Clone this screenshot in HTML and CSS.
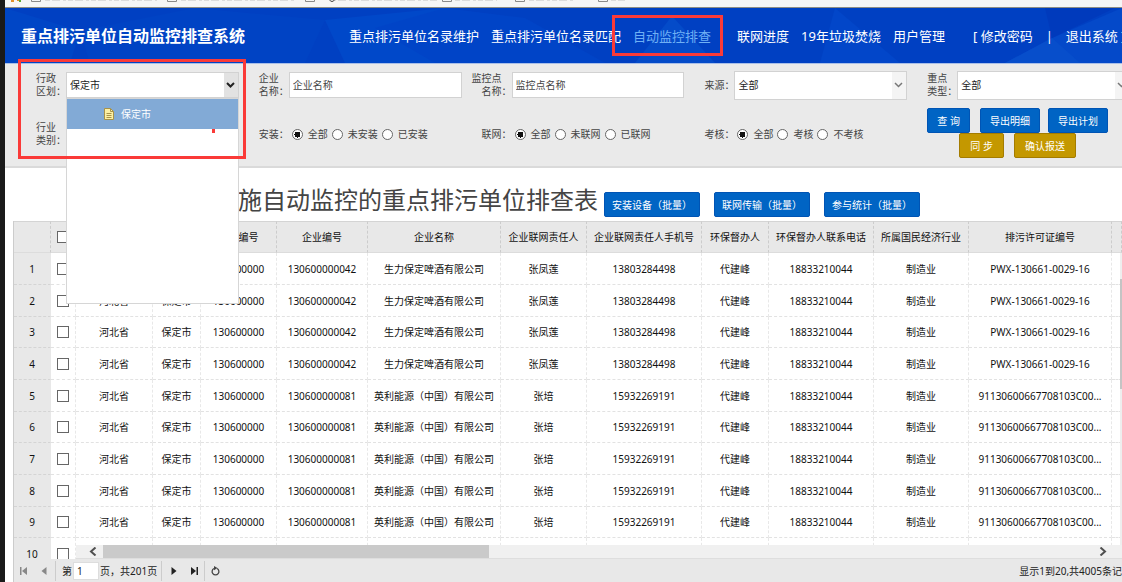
FILE: index.html
```html
<!DOCTYPE html>
<html lang="zh-CN">
<head>
  <meta charset="UTF-8" />
  <meta name="viewport" content="width=device-width, initial-scale=1.0"/>
  <title>重点排污单位自动监控排查系统</title>
  <link rel="stylesheet" href="styles.css">
</head>
<body>

  <!-- Bookmarks bar -->
  <div class="bookmarks">
    <svg width="620" height="7" viewBox="0 0 620 7" aria-hidden="true">
      <path d="M6 0h3v2H6zM12 0h4v1h-4z" fill="#e0902a"/>
      <path d="M14 0h2v2h-2z" fill="#5aa832"/>
      <path d="M26.500 0v1.500h9V0M162.500 0v1.500h9V0M300.500 0v1.500h9V0M437.500 0v1.500h9V0M510.500 0v1.500h9V0M593.500 0v1.500h9V0" fill="none" stroke="#8a8a8a"/>
      <path d="M40 .5h112M176 .5h114M326 .5h106M450 .5h42M524 .5h44M606 .5h14" stroke="#dcdcdc" stroke-dasharray="5 2 8 3 3 2"/>
      <path d="M325 0c0 2 4 2 4 0" fill="none" stroke="#333"/>
    </svg>
  </div>

  <header class="header">
    <svg class="header-bg" viewBox="0 0 1117 55" preserveAspectRatio="none" aria-hidden="true">
      <path d="M0 0L75 23 65 55H0z" fill="#0046c6"/>
      <path d="M75 23L190 0 320 12 300 55H85z" fill="#0043c4"/>
      <path d="M320 12L440 0 520 55H340z" fill="#0048c9"/>
      <path d="M370 20L440 0 520 10 600 55H430z" fill="#0044c7"/>
      <path d="M667 8L710 55H630z" fill="#044bc9"/>
      <path d="M830 0L895 55H815z" fill="#0246c9"/>
      <path d="M1047 30L1117 0V55H1000z" fill="#0449c9"/>
      <path d="M1047 30L1075 55H1000z" fill="#074ecb"/>
      <path d="M1040 0H1110L1047 30z" fill="#003abc"/>
    </svg>
    <h1>重点排污单位自动监控排查系统</h1>
    <nav class="nav">
      <a href="#">重点排污单位名录维护</a>
      <a href="#">重点排污单位名录匹配</a>
      <a href="#" class="active">自动监控排查</a>
      <a href="#">联网进度</a>
      <a href="#">19年垃圾焚烧</a>
      <a href="#">用户管理</a>
    </nav>
    <div class="account">
      <span>[ <a href="#">修改密码</a></span>
      <span>|</span>
      <span><a href="#">退出系统</a> ]</span>
    </div>
  </header>

  <!-- Filters -->
  <form class="filters">
    <div class="filter-grid">
      <div class="field">
        <label for="region">行政　<br>区划：</label>
        <div class="combo">
          <input type="text" id="region" value="保定市">
          <button type="button" class="combo-btn" aria-label="展开">
            <svg width="9" height="6" viewBox="0 0 9 6"><path d="M1 1l3.500 3.500L8 1" fill="none" stroke="#222" stroke-width="2"/></svg>
          </button>
          <ul class="combo-panel">
            <li class="selected">
              <svg width="10" height="12" viewBox="0 0 10 12"><path d="M.5 .5h6l3 3v8h-9z" fill="#fdf0a4" stroke="#a8924a"/><path d="M6.500 .5v3h3M2.500 5.500h5M2.500 7.500h5M2.500 9.500h5" fill="none" stroke="#a8924a"/></svg>
              保定市
            </li>
          </ul>
        </div>
      </div>
      <div class="field">
        <label for="company">企业　<br>名称：</label>
        <input type="text" id="company" placeholder="企业名称">
      </div>
      <div class="field">
        <label for="point">监控点　<br>名称：</label>
        <input type="text" id="point" placeholder="监控点名称">
      </div>
      <div class="field">
        <label for="source">来源：</label>
        <div class="select">
          <select id="source"><option>全部</option></select>
          <svg width="9" height="6" viewBox="0 0 9 6"><path d="M1 1l3.500 3.500L8 1" fill="none" stroke="#777" stroke-width="1.500"/></svg>
        </div>
      </div>
      <div class="field">
        <label for="type">重点　<br>类型：</label>
        <div class="select">
          <select id="type"><option>全部</option></select>
          <svg width="9" height="6" viewBox="0 0 9 6"><path d="M1 1l3.500 3.500L8 1" fill="none" stroke="#777" stroke-width="1.500"/></svg>
        </div>
      </div>

      <div class="field">
        <label for="industry">行业　<br>类别：</label>
        <input type="text" id="industry">
      </div>
      <div class="field" role="radiogroup" aria-label="安装">
        <span class="label">安装：</span>
        <div class="radios">
          <label><input type="radio" name="install" checked>全部</label>
          <label><input type="radio" name="install">未安装</label>
          <label><input type="radio" name="install">已安装</label>
        </div>
      </div>
      <div class="field" role="radiogroup" aria-label="联网">
        <span class="label">联网：</span>
        <div class="radios">
          <label><input type="radio" name="online" checked>全部</label>
          <label><input type="radio" name="online">未联网</label>
          <label><input type="radio" name="online">已联网</label>
        </div>
      </div>
      <div class="field" role="radiogroup" aria-label="考核">
        <span class="label">考核：</span>
        <div class="radios">
          <label><input type="radio" name="assess" checked>全部</label>
          <label><input type="radio" name="assess">考核</label>
          <label><input type="radio" name="assess">不考核</label>
        </div>
      </div>
      <div class="actions">
        <div class="action-row">
          <button type="button" class="btn">查 询</button>
          <button type="button" class="btn">导出明细</button>
          <button type="button" class="btn">导出计划</button>
        </div>
        <div class="action-row">
          <button type="button" class="btn gold">同 步</button>
          <button type="button" class="btn gold">确认报送</button>
        </div>
      </div>
    </div>
  </form>

  <div class="title-bar">
    <h2>已实施自动监控的重点排污单位排查表</h2>
    <div class="batch">
      <button type="button" class="btn">安装设备（批量）</button>
      <button type="button" class="btn">联网传输（批量）</button>
      <button type="button" class="btn">参与统计（批量）</button>
    </div>
  </div>

  <!-- Data grid -->
  <main class="grid">
    <div class="grid-body">
      <table>
        <colgroup>
          <col class="c-num"><col class="c-check"><col class="c-prov"><col class="c-city"><col class="c-code"><col class="c-id"><col class="c-name"><col class="c-owner"><col class="c-phone"><col class="c-sup"><col class="c-tel"><col class="c-ind"><col class="c-permit"><col>
        </colgroup>
        <thead>
          <tr><th></th><th><input type="checkbox" aria-label="全选"></th><th>省份</th><th>城市</th><th>行政编号</th><th>企业编号</th><th>企业名称</th><th>企业联网责任人</th><th>企业联网责任人手机号</th><th>环保督办人</th><th>环保督办人联系电话</th><th>所属国民经济行业</th><th>排污许可证编号</th><th></th></tr>
        </thead>
        <tbody>
          <tr><td>1</td><td><input type="checkbox" aria-label="选择1"></td><td>河北省</td><td>保定市</td><td>130600000</td><td>130600000042</td><td>生力保定啤酒有限公司</td><td>张凤莲</td><td>13803284498</td><td>代建峰</td><td>18833210044</td><td>制造业</td><td>PWX-130661-0029-16</td><td></td></tr>
          <tr><td>2</td><td><input type="checkbox" aria-label="选择2"></td><td>河北省</td><td>保定市</td><td>130600000</td><td>130600000042</td><td>生力保定啤酒有限公司</td><td>张凤莲</td><td>13803284498</td><td>代建峰</td><td>18833210044</td><td>制造业</td><td>PWX-130661-0029-16</td><td></td></tr>
          <tr><td>3</td><td><input type="checkbox" aria-label="选择3"></td><td>河北省</td><td>保定市</td><td>130600000</td><td>130600000042</td><td>生力保定啤酒有限公司</td><td>张凤莲</td><td>13803284498</td><td>代建峰</td><td>18833210044</td><td>制造业</td><td>PWX-130661-0029-16</td><td></td></tr>
          <tr><td>4</td><td><input type="checkbox" aria-label="选择4"></td><td>河北省</td><td>保定市</td><td>130600000</td><td>130600000042</td><td>生力保定啤酒有限公司</td><td>张凤莲</td><td>13803284498</td><td>代建峰</td><td>18833210044</td><td>制造业</td><td>PWX-130661-0029-16</td><td></td></tr>
          <tr><td>5</td><td><input type="checkbox" aria-label="选择5"></td><td>河北省</td><td>保定市</td><td>130600000</td><td>130600000081</td><td>英利能源（中国）有限公司</td><td>张培</td><td>15932269191</td><td>代建峰</td><td>18833210044</td><td>制造业</td><td>91130600667708103C00...</td><td></td></tr>
          <tr><td>6</td><td><input type="checkbox" aria-label="选择6"></td><td>河北省</td><td>保定市</td><td>130600000</td><td>130600000081</td><td>英利能源（中国）有限公司</td><td>张培</td><td>15932269191</td><td>代建峰</td><td>18833210044</td><td>制造业</td><td>91130600667708103C00...</td><td></td></tr>
          <tr><td>7</td><td><input type="checkbox" aria-label="选择7"></td><td>河北省</td><td>保定市</td><td>130600000</td><td>130600000081</td><td>英利能源（中国）有限公司</td><td>张培</td><td>15932269191</td><td>代建峰</td><td>18833210044</td><td>制造业</td><td>91130600667708103C00...</td><td></td></tr>
          <tr><td>8</td><td><input type="checkbox" aria-label="选择8"></td><td>河北省</td><td>保定市</td><td>130600000</td><td>130600000081</td><td>英利能源（中国）有限公司</td><td>张培</td><td>15932269191</td><td>代建峰</td><td>18833210044</td><td>制造业</td><td>91130600667708103C00...</td><td></td></tr>
          <tr><td>9</td><td><input type="checkbox" aria-label="选择9"></td><td>河北省</td><td>保定市</td><td>130600000</td><td>130600000081</td><td>英利能源（中国）有限公司</td><td>张培</td><td>15932269191</td><td>代建峰</td><td>18833210044</td><td>制造业</td><td>91130600667708103C00...</td><td></td></tr>
          <tr><td>10</td><td><input type="checkbox" aria-label="选择10"></td><td></td><td></td><td></td><td></td><td></td><td></td><td></td><td></td><td></td><td></td><td></td><td></td></tr>
        </tbody>
      </table>
      <div class="vscroll"><div class="vthumb"></div></div>
      <div class="hscroll">
        <svg width="8" height="9" viewBox="0 0 8 9"><path d="M6.500 .5L2 4.500l4.500 4" fill="none" stroke="#505050" stroke-width="2"/></svg>
        <div class="htrack"><div class="hthumb"></div></div>
        <svg width="8" height="9" viewBox="0 0 8 9"><path d="M1.500 .5L6 4.500l-4.500 4" fill="none" stroke="#505050" stroke-width="2"/></svg>
      </div>
    </div>

    <div class="pager">
      <button type="button" class="off" aria-label="首页"><svg width="8" height="8" viewBox="0 0 8 8"><path d="M0 0h1.500v8H0zM7 0v8L2 4z"/></svg></button>
      <button type="button" class="off" aria-label="上一页"><svg width="8" height="8" viewBox="0 0 8 8"><path d="M6.500 0v8L1.500 4z"/></svg></button>
      <div class="page-no">
        <label for="page">第</label>
        <input type="text" id="page" value="1">
        <span>页，共201页</span>
      </div>
      <button type="button" aria-label="下一页"><svg width="8" height="8" viewBox="0 0 8 8"><path d="M1.500 0v8l5-4z"/></svg></button>
      <button type="button" aria-label="末页"><svg width="8" height="8" viewBox="0 0 8 8"><path d="M1 0v8l5-4zM6.500 0H8v8H6.500z"/></svg></button>
      <i class="sep"></i>
      <button type="button" aria-label="刷新"><svg width="9" height="10" viewBox="0 0 9 10"><path d="M3 2.500A3.400 3.400 0 1 0 6 2.500" fill="none" stroke="#444" stroke-width="1.300"/><path d="M3 0l3.500 2L3 4.300z" fill="#444"/></svg></button>
      <span class="total">显示1到20,共4005条记录</span>
    </div>
  </main>

  <!-- Highlight marks -->
  <div class="mark mark-nav"></div>
  <div class="mark mark-region"></div>
  <div class="mark-dot"></div>

</body>
</html>
```
FILE: styles.css
```css
* { margin: 0; padding: 0; box-sizing: border-box; }
body { position: relative; display: flex; flex-direction: column; height: 100vh; overflow: hidden; border-left: 5px solid #1a1a1a; background: #fff; color: #222; font-family: "Noto Sans", "Noto Sans CJK SC", sans-serif; font-size: 10px; line-height: 12px; }
input, select, button { font: inherit; color: inherit; }
a { color: inherit; text-decoration: none; }
svg { display: block; flex: none; }
ul { list-style: none; }

.bookmarks { height: 8px; background: #f6f6f6; border-bottom: 1px solid #8c8c84; overflow: hidden; flex: none; }

.header { position: relative; display: flex; align-items: center; height: 56px; padding: 0 0 0 16px; background: #0040c2; border-bottom: 1px solid #a9bfe8; color: #fff; white-space: nowrap; flex: none; }
.header-bg { position: absolute; inset: 0; width: 100%; height: 100%; }
.header h1 { position: relative; font-size: 16px; line-height: 20px; font-weight: bold; }
.nav { position: relative; display: flex; gap: 12px; margin-left: 104px; font-size: 13px; line-height: 20px; }
.nav .active { margin-right: 14px; color: #6fb0f5; }
.account { position: relative; display: flex; gap: 13px; margin-left: 28px; font-size: 13px; line-height: 20px; }

.filters { height: 104px; padding-left: 11px; background: #eaeaea; border-bottom: 2px solid #dadada; overflow-x: clip; flex: none; }
.filter-grid { display: grid; grid-template-columns: repeat(5, 20%); grid-template-rows: 42px 56px; width: calc(100% + 8px); }
.field { display: flex; align-items: center; min-width: 0; color: #444; }
.field > label, .field > .label { width: 50px; text-align: right; line-height: 13px; white-space: pre; flex: none; }
.field > input, .combo, .select { flex: 1; min-width: 0; height: 26px; border: 1px solid #d2d2d2; background: #fff; color: #222; }
.field > input { padding: 0 3px; }
.field > input::placeholder { color: #444; opacity: 1; }
.combo { position: relative; display: flex; }
.combo input { flex: 1; min-width: 0; padding: 0 3px; border: 0; outline: 0; }
.combo-btn { display: flex; align-items: center; justify-content: center; width: 14px; border: 0; background: #e2e2e2; }
.combo-panel { position: absolute; z-index: 5; top: 25px; left: -1px; right: -1px; height: 206px; border: 1px solid #d6d6d6; background: #fff; }
.combo-panel li { display: flex; align-items: center; gap: 7px; height: 30px; padding-left: 37px; color: #fff; background: #82aad6; }
.select { position: relative; height: 29px; }
.select select { width: 100%; height: 100%; padding: 0 3px; border: 0; appearance: none; background: linear-gradient(#f4f4f4, #f4f4f4) right / 14px 100% no-repeat #fff; }
.select svg { position: absolute; right: 3px; top: 10px; pointer-events: none; }
.radios { display: flex; gap: 4px; padding-left: 3px; }
.radios label { display: flex; align-items: center; gap: 5px; }
.radios input { appearance: none; width: 11px; height: 11px; border: 1px solid #666; border-radius: 50%; background: #fff; }
.radios input:checked { background: radial-gradient(#111 0 3px, #fff 3px); }

.btn { height: 25px; padding: 0 9px; border: 1px solid #0054b4; border-radius: 2px; background: #0064c4; color: #fff; white-space: nowrap; cursor: pointer; }
.btn.gold { border-color: #a47c00; background: #c49800; }
.actions { display: flex; flex-direction: column; align-items: center; padding: 2px 2px 0 0; }
.action-row { display: flex; gap: 8px; }
.action-row:first-child .btn:first-child { margin-right: 2px; }
.action-row .gold { padding: 0 10px; }
.action-row .gold + .gold { margin-left: 2px; }

.title-bar { display: flex; align-items: center; height: 53px; padding: 10px 0 0 185px; white-space: nowrap; flex: none; }
.title-bar h2 { color: #444; font-size: 24px; line-height: 32px; font-weight: normal; }
.batch { display: flex; gap: 14px; margin-left: 6px; padding-top: 10px; }
.batch .btn { padding: 0 7px; }

.grid { display: flex; flex-direction: column; flex: 1; min-height: 0; margin-left: 8px; border-left: 1px solid #ccc; }
.grid-body { position: relative; flex: 1; min-height: 0; overflow: hidden; }
table { width: 100%; table-layout: fixed; border-collapse: separate; border-spacing: 0; }
th, td { border-right: 1px dashed #e8e8e8; border-bottom: 1px dashed #e2e2e2; font-weight: normal; text-align: center; white-space: nowrap; overflow: hidden; color: #111; }
th { height: 32px; background: #e8e8e8; border-top: 1px solid #d4d4d4; border-bottom: 1px solid #dcdcdc; border-right-color: #ccc; }
tbody tr { height: 32px; }
tbody tr:nth-child(3n) { height: 31px; }
td:first-child { background: #e8e8e8; border-bottom-color: #d4d4d4; }
th input, td input { display: block; appearance: none; width: 12px; height: 12px; margin: 0 auto; border: 1px solid #666; background: #fff; }
.c-num { width: 37px; }
.c-check { width: 25px; }
.c-prov { width: 77px; }
.c-city { width: 48px; }
.c-code { width: 76px; }
.c-id { width: 91px; }
.c-name { width: 133px; }
.c-owner { width: 86px; }
.c-phone { width: 115px; }
.c-sup { width: 67px; }
.c-tel { width: 105px; }
.c-ind { width: 95px; }
.c-permit { width: 143px; }
.vscroll { position: absolute; top: 32px; right: 0; bottom: 14px; width: 2px; padding-top: 26px; background: #eee; }
.vthumb { height: 110px; background: #c4c4c4; }
.hscroll { position: absolute; left: 62px; right: 0; bottom: 0; display: flex; align-items: center; gap: 6px; height: 14px; padding: 0 15px 0 13px; background: #f0f0f0; border-bottom: 1px solid #dedede; }
.htrack { flex: 1; height: 13px; }
.hthumb { width: 39%; height: 100%; background: #cacaca; }

.pager { display: flex; align-items: center; height: 23px; background: #e8e8e8; white-space: nowrap; overflow: hidden; flex: none; }
.pager button { display: flex; align-items: center; justify-content: center; width: 20px; height: 20px; border: 0; background: none; fill: #222; }
.pager .off { fill: #888; }
.page-no { display: flex; align-items: center; gap: 1px; height: 20px; margin: 0 2px 0 1px; padding: 0 4px 0 6px; border: solid #ccc; border-width: 0 1px; }
.page-no input { width: 26px; height: 18px; padding: 0 3px; border: 1px solid #ddd; background: #fff; }
.sep { width: 1px; height: 20px; background: #ccc; }
.total { margin-left: auto; margin-right: -10px; }

.mark { position: absolute; z-index: 10; border: 3px solid #fa3a38; pointer-events: none; }
.mark-nav { left: 607px; top: 15px; width: 111px; height: 41px; }
.mark-region { left: 13px; top: 59px; width: 228px; height: 100px; }
.mark-dot { position: absolute; z-index: 10; left: 207px; top: 129px; width: 3px; height: 4px; background: #fa3a38; }
```
